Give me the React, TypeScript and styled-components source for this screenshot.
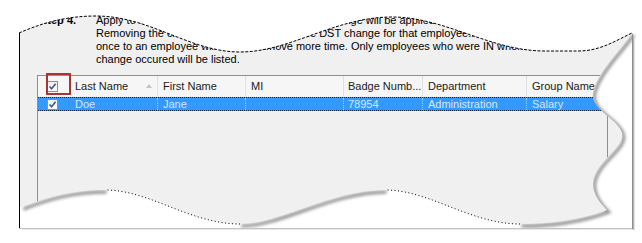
import * as React from 'react';
import styled, { createGlobalStyle } from 'styled-components';

const GlobalStyle = createGlobalStyle`
  html, body {
    margin: 0;
    padding: 0;
    background: #fff;
  }
  body {
    font-family: "Liberation Sans", Arial, sans-serif;
  }
`;

// torn-paper outline, in page coordinates
const TOP_EDGE =
  'M19 33 C42 23, 66 16, 96 16 C150 16, 190 52, 240 52 C290 52, 335 17, 392 17 C445 17, 490 51, 545 51 L578 51 C600 51, 615 41, 632 33';
const RIGHT_EDGE =
  'C625 45, 598 70, 593 92 C590 110, 618 118, 622 133 C625 148, 596 160, 593 182 C592 195, 602 205, 607 210';
const BOTTOM_EDGE =
  'C580 220, 550 224, 520 224 C470 224, 430 190, 385 190 C330 190, 280 224, 240 224 C190 224, 150 190, 105 190 C70 190, 45 198, 22 207';
const PAPER = `${TOP_EDGE} ${RIGHT_EDGE} ${BOTTOM_EDGE} L20 207 L20 33 Z`;

const SHADOWS = [
  `M632 33 ${RIGHT_EDGE} C580 220, 550 224, 520 224`,
  'M385 190 C330 190, 280 224, 240 224',
  'M105 190 C70 190, 45 198, 22 207'
];
const DOTTED = ['M520 224 C470 224, 430 190, 385 190', 'M240 224 C190 224, 150 190, 105 190'];

const Page = styled.div`
  position: relative;
  width: 642px;
  height: 243px;
  overflow: hidden;
  background: #fff;
`;
const Paper = styled.div`
  box-sizing: border-box;
  height: 243px;
  padding: 14px 0 0 20px;
  background: #f0f0f0;
  clip-path: path('${PAPER}');
  font-size: 11px;
  color: #000;
`;
const Step = styled.div`
  display: grid;
  grid-template-columns: 56px 1fr;
  padding-left: 20px;
  line-height: 13px;
`;
const StepLabel = styled.div`
  font-weight: bold;
`;
const StepText = styled.p`
  margin: 0;
  white-space: nowrap;
`;
const List = styled.div`
  position: relative;
  box-sizing: border-box;
  width: 571px;
  height: 160px;
  margin: 9px 0 0 17px;
  border: 1px solid #8c9096;
  background: #f1f0f1;
`;
const Columns = styled.div`
  display: grid;
  grid-template-columns: 120px 88px 98px 79px 104px 1fr;
`;
const Header = styled(Columns)`
  height: 20px;
  background: #f6f6f6;
  color: #1a1a1a;
`;
const HeadCell = styled.div<{ $pad?: number }>`
  display: flex;
  align-items: center;
  padding-left: ${(p) => p.$pad ?? 5}px;
  border-right: 1px solid #dde1e6;
  white-space: nowrap;
  overflow: hidden;
`;
const Row = styled(Columns)<{ $selected?: boolean }>`
  box-sizing: border-box;
  height: 14px;
  margin-top: 1px;
  background: ${(p) => (p.$selected ? '#3399ff' : 'transparent')};
  border-top: 1px dotted #10233f;
  border-bottom: 1px dotted #10233f;
  color: ${(p) => (p.$selected ? '#d6e7fb' : '#000')};
`;
const Cell = styled.div<{ $pad?: number }>`
  display: flex;
  align-items: center;
  padding-left: ${(p) => p.$pad ?? 5}px;
  border-right: 1px dotted rgba(255, 255, 255, 0.55);
  white-space: nowrap;
  overflow: hidden;
`;
const Box = styled.span`
  display: inline-flex;
  flex: none;
  box-sizing: border-box;
  width: 11px;
  height: 11px;
  margin-right: 17px;
  border: 1px solid #8e8f8f;
  background: linear-gradient(#eeeeee, #ffffff);
`;
const SortArrow = styled.span`
  margin-left: auto;
  margin-right: 5px;
  border-left: 3.5px solid transparent;
  border-right: 3.5px solid transparent;
  border-bottom: 4px solid #bcc4cc;
`;
const Highlight = styled.div`
  position: absolute;
  left: 8px;
  top: -3px;
  box-sizing: border-box;
  width: 25px;
  height: 22px;
  border: 2px solid #a83434;
`;
const Overlay = styled.svg`
  position: absolute;
  left: 0;
  top: 0;
  pointer-events: none;
`;

const Check = () => (
  <Box>
    <svg width="9" height="9" viewBox="0 0 9 9">
      <path d="M1.5 4.5 L3.6 6.7 L7.6 1.8" fill="none" stroke="#3b5895" strokeWidth="1.6" />
    </svg>
  </Box>
);

const employees = [
  { last: 'Doe', first: 'Jane', mi: '', badge: '78954', dept: 'Administration', group: 'Salary' }
];

export default function App() {
  return (
    <Page>
      <GlobalStyle />
      <Paper>
        <Step>
          <StepLabel>Step 4.</StepLabel>
          <StepText>
            Apply to all selected employees. The DST time change will be applied to each employee listed below.
            <br />
            Removing the change will always remove the DST change for that employee... removing it more than
            <br />
            once to an employee will always remove more time. Only employees who were IN when the DST
            <br />
            change occured will be listed.
          </StepText>
        </Step>
        <List>
          <Header>
            <HeadCell $pad={9}>
              <Check />
              Last Name
              <SortArrow />
            </HeadCell>
            <HeadCell>First Name</HeadCell>
            <HeadCell>MI</HeadCell>
            <HeadCell $pad={4}>Badge Numb...</HeadCell>
            <HeadCell>Department</HeadCell>
            <HeadCell>Group Name</HeadCell>
          </Header>
          {employees.map((e) => (
            <Row key={e.badge} $selected>
              <Cell $pad={9}>
                <Check />
                {e.last}
              </Cell>
              <Cell>{e.first}</Cell>
              <Cell>{e.mi}</Cell>
              <Cell $pad={4}>{e.badge}</Cell>
              <Cell>{e.dept}</Cell>
              <Cell>{e.group}</Cell>
            </Row>
          ))}
          <Highlight />
        </List>
      </Paper>
      <Overlay width="642" height="243" viewBox="0 0 642 243">
        <defs>
          <clipPath id="outside">
            <path clipRule="evenodd" d={`M0 0 H642 V243 H0 Z ${PAPER}`} />
          </clipPath>
          <filter id="soft" x="-10%" y="-10%" width="120%" height="120%">
            <feGaussianBlur stdDeviation="1.5" />
          </filter>
        </defs>
        <g clipPath="url(#outside)">
          <g filter="url(#soft)" transform="translate(1.5 2)" opacity="0.55">
            {SHADOWS.map((d) => (
              <path key={d} d={d} fill="none" stroke="#444" strokeWidth="3.5" />
            ))}
          </g>
        </g>
        <path d={TOP_EDGE} fill="none" stroke="#000" strokeWidth="1" strokeDasharray="3 1.5" />
        {DOTTED.map((d) => (
          <path key={d} d={d} fill="none" stroke="#000" strokeWidth="1" strokeDasharray="1 2.5" />
        ))}
        <line x1="19.5" y1="33" x2="19.5" y2="228" stroke="#000" />
        <line x1="19" y1="228.5" x2="633" y2="228.5" stroke="#c2c2c2" />
        <line x1="22" y1="229.5" x2="634" y2="229.5" stroke="#e8e8e8" />
        <line x1="632.5" y1="34" x2="632.5" y2="229" stroke="#8c8c8c" />
        <line x1="633.5" y1="36" x2="633.5" y2="230" stroke="#b8b8b8" />
        <line x1="634.5" y1="38" x2="634.5" y2="230" stroke="#e2e2e2" />
      </Overlay>
    </Page>
  );
}
